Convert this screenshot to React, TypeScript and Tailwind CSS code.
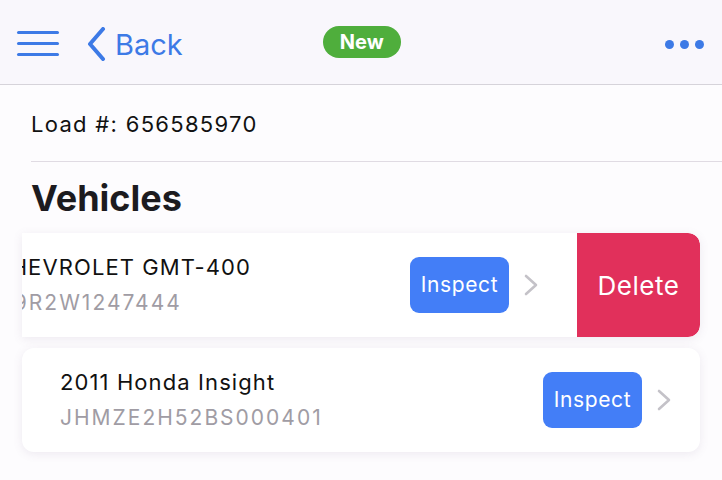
const font = { fontFamily: "Inter, 'Liberation Sans', sans-serif" };

function Chevron() {
  return (
    <svg width="16" height="24" viewBox="0 0 16 24" fill="none">
      <path d="M3 3 L13 12 L3 21" stroke="#c4c2c8" strokeWidth="2.6" strokeLinecap="round" strokeLinejoin="round" />
    </svg>
  );
}

function Row({ title, vin }: { title: string; vin: string }) {
  return (
    <div className="flex h-[104px] w-[678px] shrink-0 items-center justify-between pl-[38px] pr-[28px]">
      <div className="flex flex-col gap-[8px] whitespace-nowrap">
        <span className="text-[22px] leading-[28px] tracking-[1.1px] text-[#111]">{title}</span>
        <span className="text-[21px] leading-[28px] tracking-[2px] text-[#a09ca4]">{vin}</span>
      </div>
      <div className="flex items-center gap-[14px]">
        <button className="flex h-[56px] w-[99px] items-center justify-center rounded-[9px] bg-[#437ef7] text-[21px] tracking-[0.6px] text-white">
          Inspect
        </button>
        <Chevron />
      </div>
    </div>
  );
}

export default function App() {
  return (
    <div className="h-[480px] w-[722px] overflow-hidden bg-[#fdfcfe]" style={font}>
      <header className="flex h-[85px] items-center border-b border-[#d6d3da] bg-[#f9f7fc] pl-[17px] pr-[16px]">
        <div className="flex w-[42px] flex-col gap-[8px] pt-[2px]">
          <span className="h-[3px] rounded-full bg-[#3d7ae6]" />
          <span className="h-[3px] rounded-full bg-[#3d7ae6]" />
          <span className="h-[3px] rounded-full bg-[#3d7ae6]" />
        </div>
        <div className="ml-[26px] flex items-center pt-[4px]">
          <svg width="22" height="34" viewBox="0 0 22 34" fill="none">
            <path d="M18 2 L5 17 L18 32" stroke="#3d7ae6" strokeWidth="4" strokeLinecap="round" strokeLinejoin="round" />
          </svg>
          <span className="ml-[8px] text-[29px] leading-none text-[#3d7ae6]">Back</span>
        </div>
        <div className="ml-[140px] flex h-[32px] w-[78px] items-center justify-center rounded-full bg-[#4fae3c] text-[20px] font-bold text-white">
          New
        </div>
        <div className="ml-auto flex gap-[6px] pr-[2px] pt-[4px]">
          <span className="h-[9px] w-[9px] rounded-full bg-[#3d7ae6]" />
          <span className="h-[9px] w-[9px] rounded-full bg-[#3d7ae6]" />
          <span className="h-[9px] w-[9px] rounded-full bg-[#3d7ae6]" />
        </div>
      </header>

      <div className="ml-[31px] flex h-[77px] items-center border-b border-[#e0dbe3] pt-[3px] text-[22px] tracking-[1.3px] text-[#111]">
        Load #: 656585970
      </div>

      <h1 className="ml-[31px] flex h-[71px] items-center text-[36px] font-bold text-[#1c1b1f]">
        Vehicles
      </h1>

      <div className="flex flex-col gap-[11px] pl-[22px]">
        <div className="flex h-[104px] w-[678px] overflow-hidden rounded-r-[12px] bg-white shadow-[0_2px_10px_rgba(120,100,140,0.12)]">
          <div className="flex-1 overflow-hidden">
            <div className="ml-[-133px]">
              <Row title="2008 CHEVROLET GMT-400" vin="1GCEK19R2W1247444" />
            </div>
          </div>
          <div className="flex w-[123px] items-center justify-center rounded-r-[12px] bg-[#e1305b] text-[26px] tracking-[0.5px] text-white">
            Delete
          </div>
        </div>

        <div className="w-[678px] rounded-[12px] bg-white shadow-[0_2px_10px_rgba(120,100,140,0.12)]">
          <Row title="2011 Honda Insight" vin="JHMZE2H52BS000401" />
        </div>
      </div>
    </div>
  );
}
